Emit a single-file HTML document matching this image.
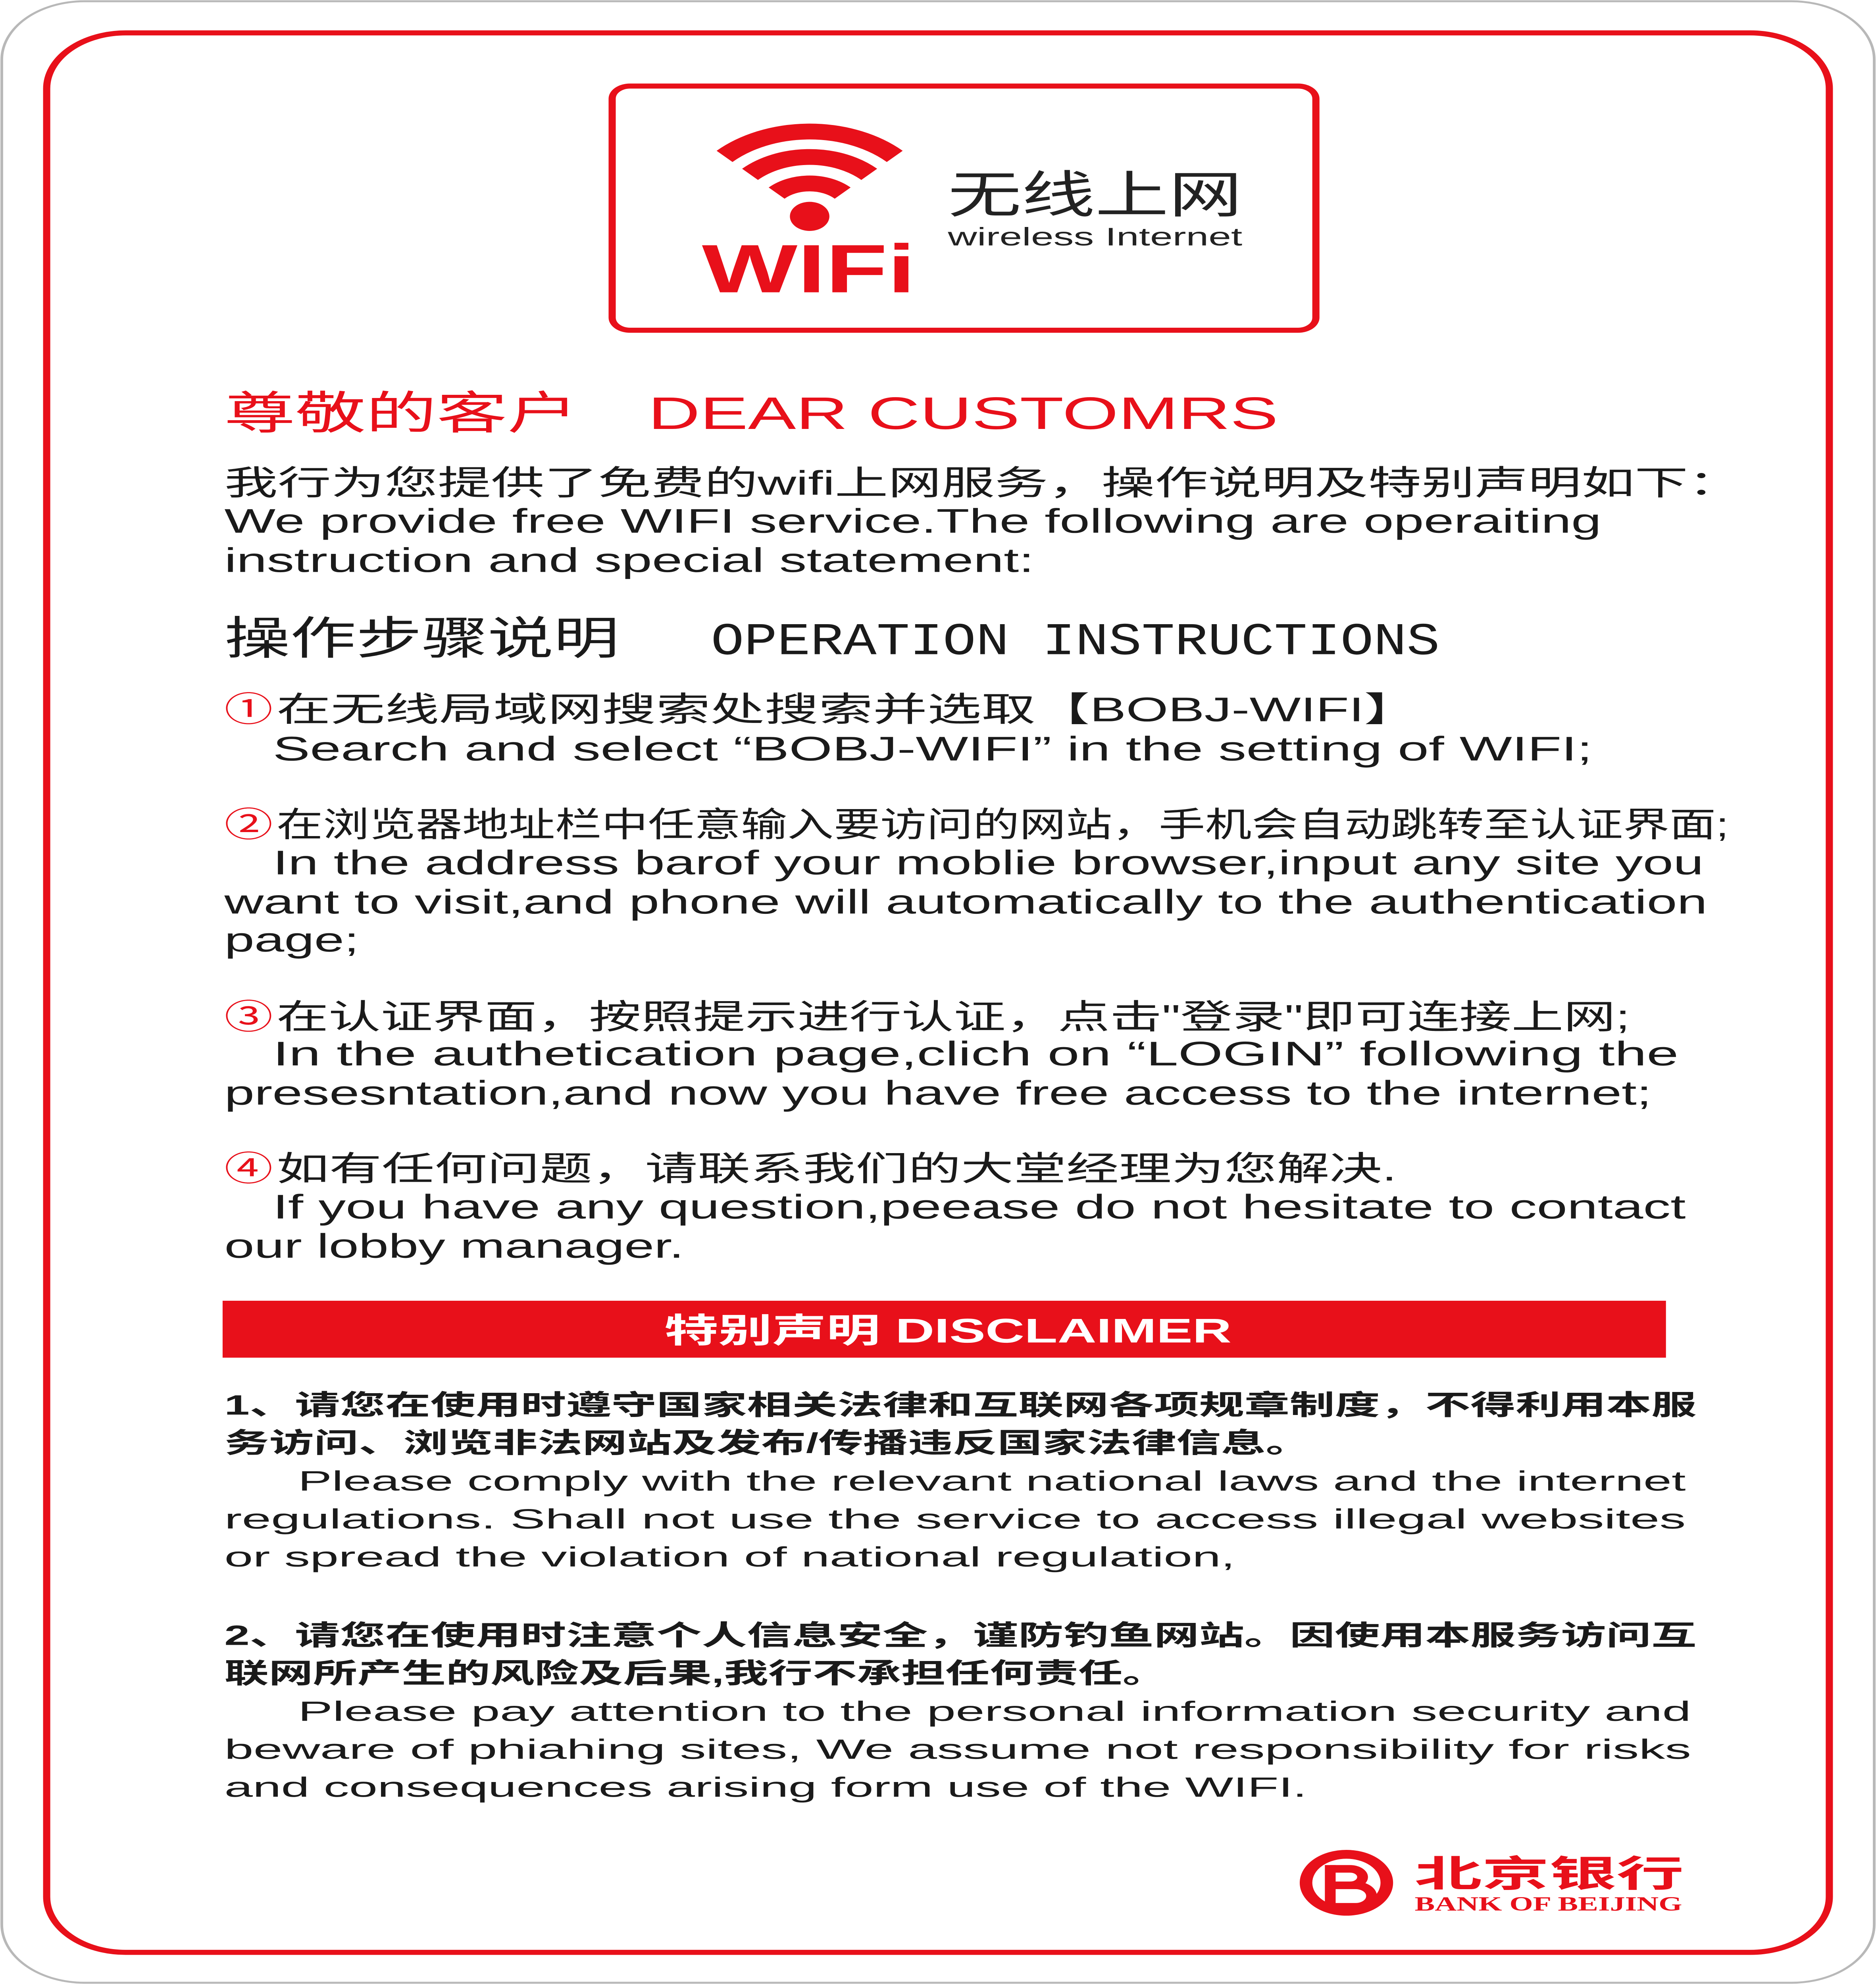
<!DOCTYPE html>
<html><head><meta charset="utf-8"><style>
html,body{margin:0;padding:0;background:#fff;width:100vw;height:100vh;overflow:hidden;}
svg{display:block;position:fixed;left:0;top:0;width:100vw;height:100vh;}
text{font-family:"Liberation Sans","Noto Sans CJK SC",sans-serif;}
</style></head><body>
<svg viewBox="0 0 1045 1568" preserveAspectRatio="none" xmlns="http://www.w3.org/2000/svg">
<rect x="0" y="0" width="1045" height="1568" fill="#fff"/>
<rect x="1" y="1" width="1043" height="1566" rx="46" fill="none" stroke="#b8b8b8" stroke-width="1.5"/>
<rect x="26" y="26" width="993" height="1517" rx="44" fill="none" stroke="#e8101a" stroke-width="4"/>
<rect x="341" y="68" width="392" height="193" rx="10" fill="none" stroke="#e8101a" stroke-width="4"/>
<g fill="none" stroke="#e8101a" stroke-width="12.5">
<path d="M403.6,123.6 A67,67 0 0 1 498.4,123.6"/>
<path d="M417.8,137.8 A47,47 0 0 1 484.2,137.8"/>
<path d="M432.6,152.6 A26,26 0 0 1 469.4,152.6"/>
</g>
<ellipse cx="451" cy="171" rx="11" ry="11.5" fill="#e8101a"/>
<text x="391" y="231" font-size="54" font-weight="bold" fill="#e8101a" textLength="119" lengthAdjust="spacingAndGlyphs">WIFi</text>
<text x="528" y="168" font-size="40" fill="#222" textLength="164" lengthAdjust="spacingAndGlyphs">无线上网</text>
<text x="528" y="194" font-size="20" fill="#222" textLength="164" lengthAdjust="spacingAndGlyphs">wireless Internet</text>
<text x="125" y="339" font-size="36" fill="#e8101a" textLength="197" lengthAdjust="spacingAndGlyphs">尊敬的客户</text>
<text x="361" y="339" font-size="36" fill="#e8101a" textLength="351" lengthAdjust="spacingAndGlyphs">DEAR CUSTOMRS</text>
<g font-size="27" fill="#1a1a1a">
<text x="125" y="391" textLength="845" lengthAdjust="spacingAndGlyphs">我行为您提供了免费的wifi上网服务，操作说明及特别声明如下：</text>
<text x="125" y="421" textLength="767" lengthAdjust="spacingAndGlyphs">We provide free WIFI service.The following are operaiting</text>
<text x="125" y="452" textLength="451" lengthAdjust="spacingAndGlyphs">instruction and special statement:</text>
</g>
<text x="125" y="517" font-size="36" fill="#1a1a1a" textLength="220" lengthAdjust="spacingAndGlyphs">操作步骤说明</text>
<text x="396" y="517" font-size="36" fill="#1a1a1a" style="font-family:'Liberation Mono',monospace" textLength="406" lengthAdjust="spacingAndGlyphs">OPERATION INSTRUCTIONS</text>
<g font-size="27" fill="#1a1a1a">
<text x="125" y="570" fill="#e8101a" textLength="27" lengthAdjust="spacingAndGlyphs">①</text>
<text x="154" y="570" textLength="636" lengthAdjust="spacingAndGlyphs">在无线局域网搜索处搜索并选取【BOBJ-WIFI】</text>
<text x="152" y="601" textLength="735" lengthAdjust="spacingAndGlyphs">Search and select “BOBJ-WIFI” in the setting of WIFI;</text>
<text x="125" y="661" fill="#e8101a" textLength="27" lengthAdjust="spacingAndGlyphs">②</text>
<text x="154" y="661" textLength="809" lengthAdjust="spacingAndGlyphs">在浏览器地址栏中任意输入要访问的网站，手机会自动跳转至认证界面;</text>
<text x="152" y="691" textLength="797" lengthAdjust="spacingAndGlyphs">In  the  address barof your moblie browser,input any site you</text>
<text x="125" y="722" textLength="826" lengthAdjust="spacingAndGlyphs">want to visit,and phone will automatically to the authentication</text>
<text x="125" y="752" textLength="75" lengthAdjust="spacingAndGlyphs">page;</text>
<text x="125" y="813" fill="#e8101a" textLength="27" lengthAdjust="spacingAndGlyphs">③</text>
<text x="154" y="813" textLength="754" lengthAdjust="spacingAndGlyphs">在认证界面，按照提示进行认证，点击"登录"即可连接上网;</text>
<text x="152" y="842" textLength="783" lengthAdjust="spacingAndGlyphs">In  the  authetication  page,clich on “LOGIN”  following  the</text>
<text x="125" y="873" textLength="795" lengthAdjust="spacingAndGlyphs">presesntation,and now you have free access to the internet;</text>
<text x="125" y="933" fill="#e8101a" textLength="27" lengthAdjust="spacingAndGlyphs">④</text>
<text x="154" y="933" textLength="624" lengthAdjust="spacingAndGlyphs">如有任何问题，请联系我们的大堂经理为您解决.</text>
<text x="152" y="963" textLength="787" lengthAdjust="spacingAndGlyphs">If  you  have any question,peease do not hesitate to contact</text>
<text x="125" y="994" textLength="256" lengthAdjust="spacingAndGlyphs">our lobby manager.</text>
</g>
<rect x="124" y="1028" width="804" height="45" fill="#e8101a"/>
<text x="370" y="1061" font-size="27" font-weight="bold" fill="#fff" textLength="316" lengthAdjust="spacingAndGlyphs">特别声明  DISCLAIMER</text>
<g font-size="22" fill="#1a1a1a">
<text x="125" y="1118" font-weight="bold" textLength="820" lengthAdjust="spacingAndGlyphs">1、请您在使用时遵守国家相关法律和互联网各项规章制度，不得利用本服</text>
<text x="125" y="1148" font-weight="bold" textLength="605" lengthAdjust="spacingAndGlyphs">务访问、浏览非法网站及发布/传播违反国家法律信息。</text>
<text x="166" y="1178" textLength="773" lengthAdjust="spacingAndGlyphs">Please comply with the relevant national laws and the internet</text>
<text x="125" y="1208" textLength="814" lengthAdjust="spacingAndGlyphs">regulations.  Shall not use the service to access illegal websites</text>
<text x="125" y="1238" textLength="563" lengthAdjust="spacingAndGlyphs">or spread the violation of national regulation,</text>
<text x="125" y="1300" font-weight="bold" textLength="820" lengthAdjust="spacingAndGlyphs">2、请您在使用时注意个人信息安全，谨防钓鱼网站。因使用本服务访问互</text>
<text x="125" y="1330" font-weight="bold" textLength="525" lengthAdjust="spacingAndGlyphs">联网所产生的风险及后果,我行不承担任何责任。</text>
<text x="166" y="1360" textLength="776" lengthAdjust="spacingAndGlyphs">Please pay attention to the personal information security and</text>
<text x="125" y="1390" textLength="817" lengthAdjust="spacingAndGlyphs">beware of phiahing sites,  We assume not responsibility for risks</text>
<text x="125" y="1420" textLength="603" lengthAdjust="spacingAndGlyphs">and consequences arising form use of the WIFI.</text>
</g>
<ellipse cx="750" cy="1488" rx="22.5" ry="22.5" fill="none" stroke="#e8101a" stroke-width="7"/>
<path d="M741,1477 h11 a7,6.5 0 0 1 0,13 h-11 M741,1490 h14 a9,8.5 0 0 1 0,17 h-14" fill="none" stroke="#e8101a" stroke-width="6"/>
<rect x="738" y="1474" width="6" height="36" fill="#e8101a"/>
<text x="788" y="1491" font-size="29" font-weight="bold" fill="#e8101a" textLength="150" lengthAdjust="spacingAndGlyphs">北京银行</text>
<text x="788" y="1510" font-size="16" font-weight="bold" fill="#e8101a" style="font-family:'Liberation Serif',serif" textLength="149" lengthAdjust="spacingAndGlyphs">BANK OF BEIJING</text>
</svg>
</body></html>
